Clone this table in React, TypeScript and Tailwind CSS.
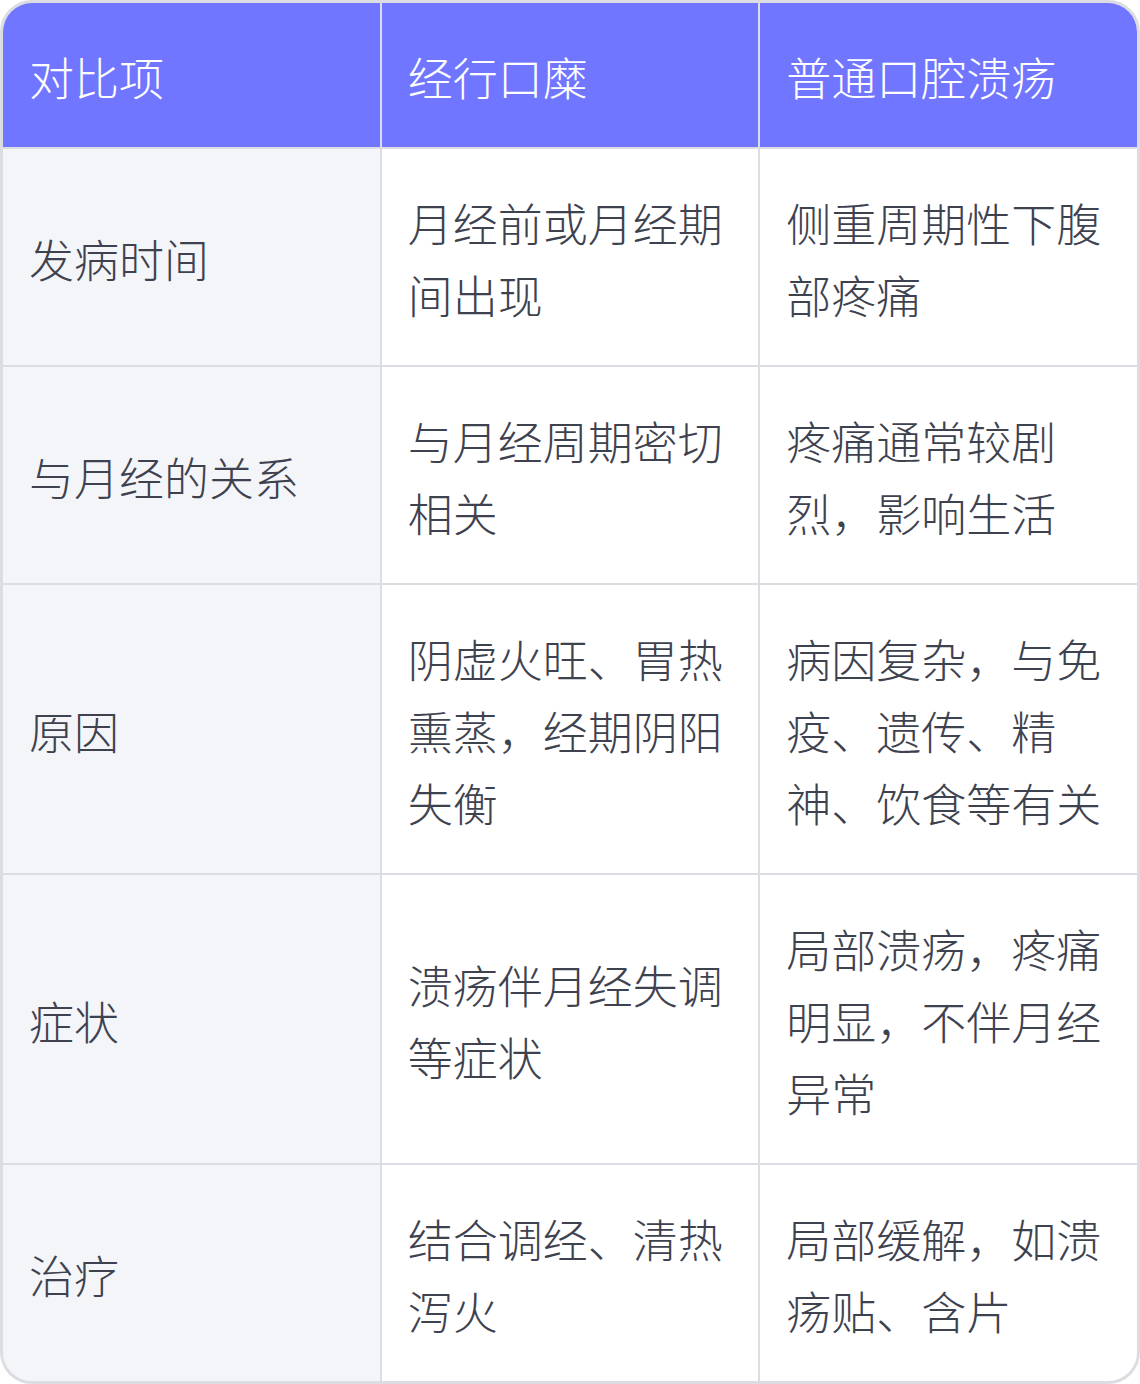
const header = ["对比项", "经行口糜", "普通口腔溃疡"];

const rows: [string, string, string][] = [
  ["发病时间", "月经前或月经期间出现", "侧重周期性下腹部疼痛"],
  ["与月经的关系", "与月经周期密切相关", "疼痛通常较剧烈，影响生活"],
  ["原因", "阴虚火旺、胃热熏蒸，经期阴阳失衡", "病因复杂，与免疫、遗传、精神、饮食等有关"],
  ["症状", "溃疡伴月经失调等症状", "局部溃疡，疼痛明显，不伴月经异常"],
  ["治疗", "结合调经、清热泻火", "局部缓解，如溃疡贴、含片"],
];

const cell = "flex items-center pl-[26px] pr-[26px] pt-[38px] pb-[34px]";

export default function App() {
  return (
    <div
      className="w-[1140px] bg-white"
      style={{ fontFamily: '"Noto Sans CJK SC", "Noto Sans", sans-serif' }}
    >
      <div className="overflow-hidden rounded-[32px] border-[3px] border-[#dcdde2]">
        <div className="grid grid-cols-3 gap-[2px] bg-[#dcdde2] text-[45px] font-light leading-[72px]">
          {/* header row */}
          {header.map((h) => (
            <div key={h} className={`${cell} bg-[#7076ff] text-white`}>
              {h}
            </div>
          ))}
          {rows.map((r) => (
            <>
              <div key={r[0]} className={`${cell} bg-[#f4f5f9] text-[#3e424f]`}>
                {r[0]}
              </div>
              <div className={`${cell} bg-white text-[#3e424f]`}>{r[1]}</div>
              <div className={`${cell} bg-white text-[#3e424f]`}>{r[2]}</div>
            </>
          ))}
        </div>
      </div>
    </div>
  );
}
